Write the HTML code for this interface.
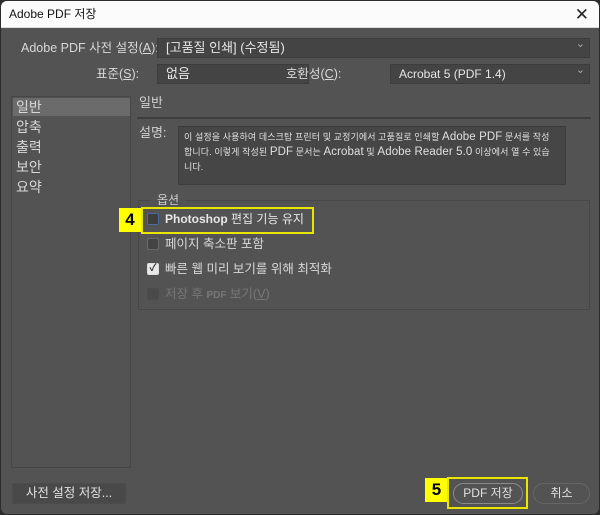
<!DOCTYPE html>
<html><head><meta charset="utf-8"><style>
*{margin:0;padding:0;box-sizing:border-box}
body{width:600px;height:515px;background:#2b2b2b;font-family:"Liberation Sans","Noto Sans CJK KR",sans-serif;position:relative;overflow:hidden}
.win{position:absolute;left:1px;top:1px;width:598px;height:513px;background:#535353;border-radius:6px;overflow:hidden}
.title{position:absolute;left:0;top:0;width:598px;height:27px;background:#fbfbfb;border-bottom:1px solid #ddd;color:#111;font-size:12px;line-height:27px;padding-left:8px}
.x{position:absolute;right:10px;top:0;font-size:17px;line-height:27px;color:#222}
.a{position:absolute;color:#d8d8d8;font-size:12.5px;white-space:nowrap;line-height:16px}
.dd{position:absolute;background:#444;border:1px solid #3c3c3c;color:#e6e6e6;font-size:13px;line-height:18px;padding-left:8px;white-space:nowrap}
.dd:after{content:"⌄";position:absolute;right:4px;top:-4px;font-size:11px;color:#aaa}
.panel{position:absolute;left:10px;top:95px;width:120px;height:372px;border:1px solid #474747;background:#535353}
.it{position:absolute;left:4px;color:#d8d8d8;font-size:14px;line-height:20px}
.sel{position:absolute;left:1px;top:1px;width:117px;height:18px;background:#6b6b6b}
.cb{position:absolute;width:12px;height:12px;background:#444;border:1px solid #6a6a6a;border-radius:2px}
.yl{position:absolute;background:#ffff00;color:#000;font-weight:bold;font-size:17px;text-align:center}
.ybox{position:absolute;border:2px solid #e6e600}
.btn{position:absolute;border:1px solid #8a8a8a;border-radius:11px;color:#e0e0e0;font-size:12px;text-align:center;line-height:19px}
</style></head><body>
<div class="win">
<div class="title">Adobe PDF 저장<span class="x">✕</span></div>
<div class="a" style="left:20px;top:39px">Adobe PDF 사전 설정(<u>A</u>):</div>
<div class="dd" style="left:156px;top:37px;width:433px;height:20px">[고품질 인쇄] (수정됨)</div>
<div class="a" style="left:95px;top:65px">표준(<u>S</u>):</div>
<div class="dd" style="left:156px;top:63px;width:152px;height:20px">없음</div>
<div class="a" style="left:285px;top:65px">호환성(<u>C</u>):</div>
<div class="dd" style="left:389px;top:63px;width:200px;height:20px;font-size:12px">Acrobat 5 (PDF 1.4)</div>
<div class="panel"><div class="sel"></div>
<div class="it" style="top:0px">일반</div><div class="it" style="top:20px">압축</div><div class="it" style="top:40px">출력</div><div class="it" style="top:60px">보안</div><div class="it" style="top:80px">요약</div></div>
<div class="a" style="left:138px;top:94px;font-size:13px;color:#cfcfcf">일반</div>
<div style="position:absolute;left:136px;top:116px;width:454px;height:2px;background:#3d3d3d"></div>
<div class="a" style="left:138px;top:124px;font-size:13px;color:#cfcfcf">설명:</div>
<div style="position:absolute;left:177px;top:125px;width:388px;height:59px;background:#464646;border:1px solid #3d3d3d;color:#e0e0e0;font-size:9px;line-height:15px;padding:3px 12px 2px 5px;letter-spacing:0.1px">이 설정을 사용하여 데스크탑 프린터 및 교정기에서 고품질로 인쇄할 <span style="font-size:11.5px">Adobe PDF</span> 문서를 작성합니다. 이렇게 작성된 <span style="font-size:11.5px">PDF</span> 문서는 <span style="font-size:11.5px">Acrobat</span> 및 <span style="font-size:11.5px">Adobe Reader 5.0</span> 이상에서 열 수 있습니다.</div>
<div style="position:absolute;left:137px;top:199px;width:452px;height:110px;border:1px solid #474747"></div>
<div class="a" style="left:150px;top:191px;background:#535353;padding:0 6px;font-size:12px;color:#cfcfcf">옵션</div>
<div class="cb" style="left:146px;top:212px;border-color:#4a6aa0;background:#3e3e3e"></div>
<div class="a" style="left:164px;top:210px;font-size:12px;color:#e8e8e8"><b>Photoshop</b> 편집 기능 유지</div>
<div class="cb" style="left:146px;top:237px"></div>
<div class="a" style="left:164px;top:235px;font-size:12.5px">페이지 축소판 포함</div>
<div class="cb" style="left:146px;top:262px;background:#e8e8e8;border-color:#ddd;font-size:10px;line-height:10px;color:#333;text-align:center;font-weight:bold">✓</div>
<div class="a" style="left:164px;top:260px;font-size:12.5px">빠른 웹 미리 보기를 위해 최적화</div>
<div class="cb" style="left:146px;top:287px;background:#4a4a4a;border-color:#4c4c4c"></div>
<div class="a" style="left:164px;top:285px;font-size:12.5px;color:#777">저장 후 <b style="font-size:10px">PDF</b> 보기(<u>V</u>)</div>
<div class="yl" style="left:118px;top:207px;width:22px;height:24px;line-height:24px">4</div>
<div class="ybox" style="left:140px;top:206px;width:173px;height:27px"></div>
<div style="position:absolute;left:11px;top:482px;width:114px;height:21px;background:#494949;border:1px solid #4c4c4c;color:#e0e0e0;font-size:12.5px;text-align:center;line-height:19px">사전 설정 저장...</div>
<div class="yl" style="left:424px;top:477px;width:23px;height:24px;line-height:24px">5</div>
<div class="ybox" style="left:446px;top:476px;width:81px;height:32px"></div>
<div class="btn" style="left:452px;top:482px;width:70px;height:21px">PDF 저장</div>
<div class="btn" style="left:532px;top:482px;width:57px;height:21px;border-color:#666">취소</div>
</div>
</body></html>
